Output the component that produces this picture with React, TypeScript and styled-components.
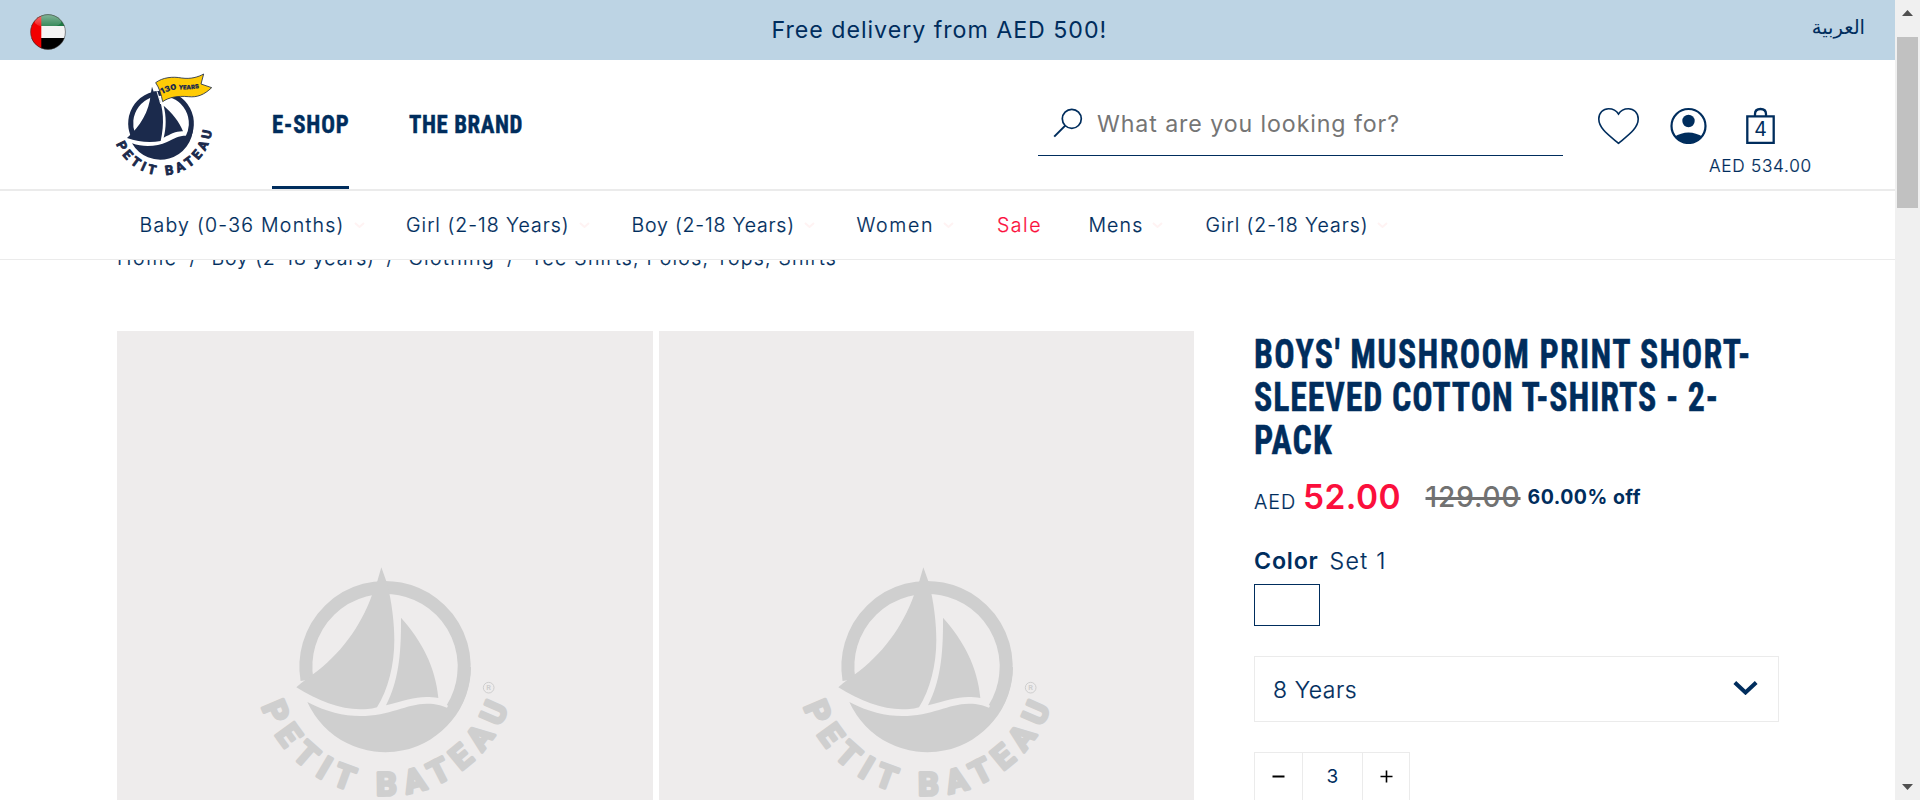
import React from 'react';
import styled, { createGlobalStyle } from 'styled-components';

const navy = '#002d5d';
const logoNavy = '#1b2a4c';
const red = '#fb0f3c';
const rule = '#ebebeb';

const GlobalStyle = createGlobalStyle`
  html, body { margin: 0; padding: 0; background: #fff; overflow: hidden; }
  * { box-sizing: border-box; }
  body { font-family: Inter, "Liberation Sans", sans-serif; color: ${navy}; }
`;

const Shell = styled.div`
  display: flex;
  width: 1920px;
  height: 800px;
  overflow: hidden;
`;
const Page = styled.div`
  width: 1895px;
  height: 800px;
  overflow: hidden;
`;

const Text = styled.span<{ $size: number; $weight?: number; $ls?: number; $lh?: number; $color?: string }>`
  font-size: ${p => p.$size}px;
  font-weight: ${p => p.$weight ?? 300};
  -webkit-text-stroke: ${p => (p.$weight ? '0' : '0.2px')} currentColor;
  letter-spacing: ${p => p.$ls ?? 0}px;
  line-height: ${p => (p.$lh ? `${p.$lh}px` : 'normal')};
  color: ${p => p.$color ?? navy};
  white-space: pre;
`;

/* Top banner */
const Banner = styled.div`
  display: flex;
  align-items: center;
  height: 60px;
  padding: 0 30px 0 30px;
  background: #bdd4e4;
`;
const Flag = styled.svg`
  width: 36px;
  height: 36px;
  margin-top: 4px;
  flex: none;
`;
const BannerMessage = styled.div`
  margin-left: 705.5px;
`;
const Language = styled.a`
  margin-left: auto;
  margin-bottom: 5px;
  font-family: "Liberation Serif", "DejaVu Sans", serif;
  font-size: 19.5px;
`;

/* Header */
const Header = styled.header`
  position: relative;
  z-index: 1;
  background: #fff;
`;
const MainBar = styled.div`
  display: flex;
  align-items: flex-start;
  height: 131px;
  border-bottom: 2px solid ${rule};
  padding-left: 100px;
`;
const Logo = styled.svg`
  width: 130px;
  height: 129px;
  flex: none;
`;
const TopNav = styled.nav`
  display: flex;
  gap: 60px;
  margin-left: 42px;
`;
const TopNavItem = styled.a<{ $width: number; $active?: boolean }>`
  width: ${p => p.$width}px;
  height: 129px;
  border-bottom: 3px solid ${p => (p.$active ? navy : 'transparent')};
`;
const Condensed = styled.span<{ $size: number; $lh: number; $scale: number; $ls: number }>`
  display: block;
  width: max-content;
  font-family: "Roboto Condensed", "Liberation Sans Narrow", sans-serif;
  font-weight: 700;
  -webkit-text-stroke: 0.5px ${navy};
  font-size: ${p => p.$size}px;
  line-height: ${p => p.$lh}px;
  letter-spacing: ${p => p.$ls}px;
  white-space: pre;
  transform: scaleX(${p => p.$scale});
  transform-origin: left center;
`;
const Search = styled.div`
  display: flex;
  width: 525px;
  height: 60px;
  margin: 36px 0 0 auto;
  padding-left: 15px;
  border-bottom: 1px solid ${navy};
`;
const SearchIcon = styled.svg`
  width: 30px;
  height: 30px;
  margin: 12px 14px 0 0;
`;
const Tools = styled.div`
  display: flex;
  width: 332px;
  padding: 47px 0 0 34px;
`;
const HeartIcon = styled.svg`
  width: 43px;
  height: 38px;
  flex: none;
`;
const UserIcon = styled.svg`
  width: 37px;
  height: 37px;
  margin-left: 30px;
  flex: none;
`;
const Cart = styled.div`
  display: flex;
  flex-direction: column;
  align-items: center;
  width: 104px;
  margin-left: 1px;
`;
const BagIcon = styled.svg`
  width: 29px;
  height: 37px;
`;
const CartTotal = styled.div`
  display: flex;
  margin: 13px 0 0 1px;
`;

const SubNav = styled.nav`
  display: flex;
  height: 69px;
  padding-left: 139.5px;
  border-bottom: 1px solid ${rule};
`;
const SubNavItem = styled.a<{ $width: number }>`
  display: flex;
  align-items: center;
  flex: none;
  width: ${p => p.$width}px;
`;
const SubChevron = styled.svg`
  width: 11px;
  height: 6px;
  margin-left: 9px;
`;

/* Content */
const Content = styled.main`
  padding-left: 117px;
`;
const Breadcrumb = styled.div`
  display: flex;
  height: 30px;
  margin-top: -16px;
`;
const Crumb = styled.span<{ $width: number }>`
  flex: none;
  width: ${p => p.$width}px;
  line-height: 30px;
`;
const Product = styled.div`
  display: flex;
  margin-top: 57px;
`;
const Gallery = styled.div`
  display: flex;
  gap: 6px;
  width: 1077px;
`;
const Tile = styled.div`
  flex: 1;
  height: 469px;
  padding: 219px 0 0 123px;
  background: #eeecec;
  overflow: hidden;
`;
const Placeholder = styled.svg`
  display: block;
  width: 300px;
  height: 250px;
`;
const Details = styled.section`
  width: 525px;
  margin-left: 60px;
`;
const Title = styled.h1`
  margin: 2px 0 0;
`;
const PriceRow = styled.div`
  display: flex;
  align-items: flex-start;
  height: 60px;
  margin-top: 5px;
`;
const Price = styled.div<{ $width: number }>`
  flex: none;
  display: flex;
  width: ${p => p.$width}px;
`;
const Struck = styled(Text)`
  text-decoration: line-through;
  text-decoration-thickness: 2.5px;
`;
const ColorRow = styled.div`
  display: flex;
  gap: 11px;
  margin-top: 20px;
`;
const Swatch = styled.div`
  width: 66px;
  height: 42px;
  margin-top: 8px;
  border: 1px solid ${navy};
`;
const Select = styled.div`
  display: flex;
  align-items: center;
  justify-content: space-between;
  height: 66px;
  margin-top: 30px;
  padding: 1px 20px 0 18px;
  border: 1px solid ${rule};
`;
const SelectChevron = styled.svg`
  width: 25px;
  height: 14px;
  margin-bottom: 4px;
`;
const Quantity = styled.div`
  display: flex;
  width: 156px;
  height: 49px;
  margin-top: 30px;
  border: 1px solid ${rule};
  border-bottom: 0;
`;
const QtyCell = styled.div<{ $width: number }>`
  display: flex;
  align-items: center;
  justify-content: center;
  width: ${p => p.$width}px;
  padding-bottom: 1px;
  & + & { border-left: 1px solid ${rule}; }
`;
const QtyIcon = styled.svg`
  width: 13px;
  height: 13px;
`;

/* Scrollbar */
const Scrollbar = styled.div`
  display: flex;
  flex-direction: column;
  align-items: center;
  width: 25px;
  height: 800px;
  padding: 10px 0;
  background: #f0f0f0;
`;
const ScrollArrow = styled.svg`
  width: 11px;
  height: 6px;
`;
const Thumb = styled.div`
  width: 21px;
  height: 171px;
  margin: 21px 0 auto;
  background: #c1c1c1;
`;

const subNav = [
  { label: 'Baby (0-36 Months)', width: 266.6, ls: 1.27 },
  { label: 'Girl (2-18 Years)', width: 225.5, ls: 1.0 },
  { label: 'Boy (2-18 Years)', width: 225, ls: 0.8 },
  { label: 'Women', width: 140.4, ls: 1.65 },
  { label: 'Sale', width: 91.4, ls: 1.55, plain: true },
  { label: 'Mens', width: 117.1, ls: 1.15 },
  { label: 'Girl (2-18 Years)', width: 200, ls: 0.97 },
];

const crumbs = [
  { label: 'Home', width: 72.5, ls: 1.6 },
  { label: '/', width: 22, ls: 0 },
  { label: 'Boy (2-18 years)', width: 175, ls: 0.87 },
  { label: '/', width: 22, ls: 0 },
  { label: 'Clothing', width: 98.5, ls: 1.4 },
  { label: '/', width: 23.5, ls: 0 },
  { label: 'Tee Shirts, Polos, Tops, Shirts', width: 320, ls: 1.22 },
];

const FlagIcon = () => (
  <Flag viewBox="0 0 36 36">
    <defs>
      <clipPath id="flagClip"><circle cx="18" cy="18" r="17.5" /></clipPath>
      <linearGradient id="flagGloss" x1="0" y1="0" x2="0" y2="1">
        <stop offset="0" stopColor="#fff" stopOpacity=".45" />
        <stop offset="1" stopColor="#fff" stopOpacity=".08" />
      </linearGradient>
    </defs>
    <g clipPath="url(#flagClip)">
      <rect width="36" height="36" fill="#f4f4f4" />
      <rect width="36" height="12" fill="#1e7a45" />
      <rect y="24" width="36" height="12" fill="#000" />
      <rect width="11.3" height="36" fill="#f20000" />
      <ellipse cx="18" cy="7" rx="13.5" ry="6.5" fill="url(#flagGloss)" />
    </g>
    <circle cx="18" cy="18" r="17.4" fill="none" stroke="#333" strokeOpacity=".55" strokeWidth="1" />
  </Flag>
);

const BrandLogo = () => (
  <Logo viewBox="0 0 390 387">
    <g fill={logoNavy}>
      <path d="M98 223 A91 91 0 1 1 262 236" fill="none" stroke={logoNavy} strokeWidth="15" />
      <path d="M156 80 L163 101 L175 107 C190 145 194 190 182 243 C150 249 115 246 81 234 C120 200 148 155 152 103 Z" />
      <path d="M191 137 C215 158 238 184 249 214 C229 213 213 222 191 233 C199 203 199 168 191 137 Z" />
      <path d="M96 250 C130 263 172 260 201 246 C225 234 236 226 263 227 L279 199 A98 98 0 0 1 96 250 Z" />
    </g>
    <path d="M171 94 C174 104 178 116 182 132" stroke="#fff" strokeWidth="3" fill="none" />
    <path d="M167 68 C188 52 218 49 245 54 C272 58 295 51 311 42 L303 72 L335 83 C313 104 292 113 265 110 C232 107 206 112 188 125 C184 104 178 84 167 68 Z" fill="#ffcb05" stroke={logoNavy} strokeWidth="2.5" />
    <defs>
      <path id="ribbon" d="M186 103 Q210 89 240 88 Q270 90 312 82" />
      <path id="logoArc" d="M48 250 A149 149 0 0 0 336 200" />
    </defs>
    <text fill={logoNavy} fontFamily="Inter, sans-serif" fontWeight="900" fontSize="24"><textPath href="#ribbon" textLength="47" lengthAdjust="spacingAndGlyphs">130</textPath></text>
    <text fill={logoNavy} stroke={logoNavy} strokeWidth=".4" fontFamily="Inter, sans-serif" fontWeight="900" fontSize="18"><textPath href="#ribbon" startOffset="52" textLength="62" lengthAdjust="spacingAndGlyphs">YEARS</textPath></text>
    <text fill={logoNavy} stroke={logoNavy} strokeWidth="2.6" strokeLinejoin="round" fontFamily="Roboto, sans-serif" fontWeight="700" fontSize="39"><textPath href="#logoArc" startOffset="2" textLength="394">PETIT BATEAU</textPath></text>
  </Logo>
);

const PlaceholderArt = ({ id }: { id: string }) => (
  <Placeholder viewBox="0 0 900 750">
    <g fill="#cfcfcf">
      <path d="M201 390 A237.5 237.5 0 1 1 637 475" fill="none" stroke="#cfcfcf" strokeWidth="39" />
      <path d="M424 52 L440 97 L449 135 C456 170 463 220 463 270 C463 345 444 420 411 472 C390 478 375 478 360 478 C300 478 232 452 169 412 L183 400 L217 374 C300 315 362 230 396 135 L411 97 Z" />
      <path d="M483 203 C543 270 587 350 595 444 C540 434 505 448 438 466 C474 395 484 320 483 203 Z" />
      <path d="M202 456 C260 486 310 498 360 498 C450 498 500 461 560 461 C590 461 605 466 621 473 A218 218 0 0 0 654 351 L693 351 A257 257 0 0 1 202 456 Z" />
    </g>
    <defs>
      <path id={id} d="M62 460 A390 390 0 0 0 808 460" />
    </defs>
    <text fill="#cfcfcf" stroke="#cfcfcf" strokeWidth="9" strokeLinejoin="round" fontFamily="Roboto, sans-serif" fontWeight="700" fontSize="97"><textPath href={`#${id}`} startOffset="9" textLength="972">PETIT BATEAU</textPath></text>
    <circle cx="746" cy="413" r="16" fill="none" stroke="#cfcfcf" strokeWidth="3" />
    <text x="746" y="421" textAnchor="middle" fill="#cfcfcf" fontFamily="Roboto, sans-serif" fontWeight="700" fontSize="22">R</text>
  </Placeholder>
);

export default function App() {
  return (
    <Shell>
      <GlobalStyle />
      <Page>
        <Banner>
          <FlagIcon />
          <BannerMessage><Text $size={23.2} $weight={400} $ls={0.97}>Free delivery from AED 500!</Text></BannerMessage>
          <Language>العربية</Language>
        </Banner>

        <Header>
          <MainBar>
            <BrandLogo />
            <TopNav>
              <TopNavItem $width={77} $active><Condensed $size={26.5} $lh={127} $scale={0.86} $ls={1}>E-SHOP</Condensed></TopNavItem>
              <TopNavItem $width={115}><Condensed $size={26.5} $lh={127} $scale={0.86} $ls={0.7}>THE BRAND</Condensed></TopNavItem>
            </TopNav>
            <Search>
              <SearchIcon viewBox="0 0 30 30" fill="none" stroke={navy} strokeWidth="1.7">
                <circle cx="18.8" cy="10.8" r="9.5" />
                <path d="M12.2 17.6 L1.2 28.6" strokeWidth="2" />
              </SearchIcon>
              <Text $size={23.2} $weight={400} $ls={0.9} $lh={56} $color="#757575">What are you looking for?</Text>
            </Search>
            <Tools>
              <HeartIcon viewBox="0 0 43 38" fill="none" stroke={navy} strokeWidth="1.6">
                <path d="M21.5 36.3 C11 27.5 1.8 21 1.8 12 C1.8 5.8 6.2 1.7 11.5 1.7 C15.8 1.7 19.5 3.6 21.5 7 C23.5 3.6 27.2 1.7 31.5 1.7 C36.8 1.7 41.2 5.8 41.2 12 C41.2 21 32 27.5 21.5 36.3 Z" />
              </HeartIcon>
              <UserIcon viewBox="0 0 37 37">
                <clipPath id="userClip"><circle cx="18.5" cy="19" r="17" /></clipPath>
                <circle cx="18.5" cy="19" r="17" fill="none" stroke={navy} strokeWidth="2.2" />
                <circle cx="18.5" cy="14" r="6.2" fill={navy} />
                <path d="M4 30 Q11 25.5 18.5 25.5 Q26 25.5 33 30 V40 H4 Z" fill={navy} clipPath="url(#userClip)" />
              </UserIcon>
              <Cart>
                <BagIcon viewBox="0 0 29 37">
                  <path d="M1.3 9.3 H27.7 V35.8 H1.3 Z M9 9 V7 Q9 2 14.5 2 Q20 2 20 7 V9" fill="none" stroke={navy} strokeWidth="2.3" />
                  <text x="14.5" y="28.7" textAnchor="middle" fill={navy} fontFamily="Inter, sans-serif" fontSize="19.5">4</text>
                </BagIcon>
                <CartTotal><Text $size={17.2} $ls={0.75} $lh={18}>AED 534.00</Text></CartTotal>
              </Cart>
            </Tools>
          </MainBar>
          <SubNav>
            {subNav.map((item, i) => (
              <SubNavItem key={i} $width={item.width}>
                <Text $size={19.5} $lh={67} $ls={item.ls} $color={item.plain ? red : navy}>{item.label}</Text>
                {!item.plain && (
                  <SubChevron viewBox="0 0 11 6"><path d="M1 1 L5.5 5 L10 1" fill="none" stroke="#fff3f3" strokeWidth="2" /></SubChevron>
                )}
              </SubNavItem>
            ))}
          </SubNav>
        </Header>

        <Content>
          <Breadcrumb>
            {crumbs.map((c, i) => (
              <Crumb key={i} $width={c.width}><Text $size={19.5} $ls={c.ls}>{c.label}</Text></Crumb>
            ))}
          </Breadcrumb>
          <Product>
            <Gallery>
              <Tile><PlaceholderArt id="arcLeft" /></Tile>
              <Tile><PlaceholderArt id="arcRight" /></Tile>
            </Gallery>
            <Details>
              <Title>
                <Condensed $size={40.8} $lh={43} $scale={0.83} $ls={1.6}>BOYS' MUSHROOM PRINT SHORT-</Condensed>
                <Condensed $size={40.8} $lh={43} $scale={0.83} $ls={1.1}>SLEEVED COTTON T-SHIRTS - 2-</Condensed>
                <Condensed $size={40.8} $lh={43} $scale={0.83} $ls={1.4}>PACK</Condensed>
              </Title>
              <PriceRow>
                <Price $width={49}><Text $size={19.8} $lh={70} $ls={1}>AED</Text></Price>
                <Price $width={122.5}><Text $size={33.5} $weight={600} $lh={60} $ls={0.4} $color={red}>52.00</Text></Price>
                <Price $width={102}><Struck $size={28} $weight={450} $lh={60} $ls={0.9} $color="#717171">129.00</Struck></Price>
                <Text $size={19.5} $weight={700} $lh={60} $ls={0.5}>60.00% off</Text>
              </PriceRow>
              <ColorRow>
                <Text $size={23.2} $weight={600} $lh={29} $ls={0.8}>Color</Text>
                <Text $size={23.2} $lh={29} $ls={1.3}>Set 1</Text>
              </ColorRow>
              <Swatch />
              <Select>
                <Text $size={23} $lh={64} $ls={0.55}>8 Years</Text>
                <SelectChevron viewBox="0 0 25 14"><path d="M1.8 1.5 L12.5 11.5 L23.2 1.5" fill="none" stroke={navy} strokeWidth="4" /></SelectChevron>
              </Select>
              <Quantity>
                <QtyCell $width={47}><QtyIcon viewBox="0 0 13 13"><path d="M.5 6.5 H12.5" stroke="#000" strokeWidth="2" /></QtyIcon></QtyCell>
                <QtyCell $width={61}><Text $size={19} $weight={400}>3</Text></QtyCell>
                <QtyCell $width={47}><QtyIcon viewBox="0 0 13 13"><path d="M.5 6.5 H12.5 M6.5 .5 V12.5" stroke="#000" strokeWidth="1.6" /></QtyIcon></QtyCell>
              </Quantity>
            </Details>
          </Product>
        </Content>
      </Page>
      <Scrollbar>
        <ScrollArrow viewBox="0 0 11 6"><path d="M0 6 L5.5 0 L11 6 Z" fill="#505050" /></ScrollArrow>
        <Thumb />
        <ScrollArrow viewBox="0 0 11 6"><path d="M0 0 L5.5 6 L11 0 Z" fill="#505050" /></ScrollArrow>
      </Scrollbar>
    </Shell>
  );
}
